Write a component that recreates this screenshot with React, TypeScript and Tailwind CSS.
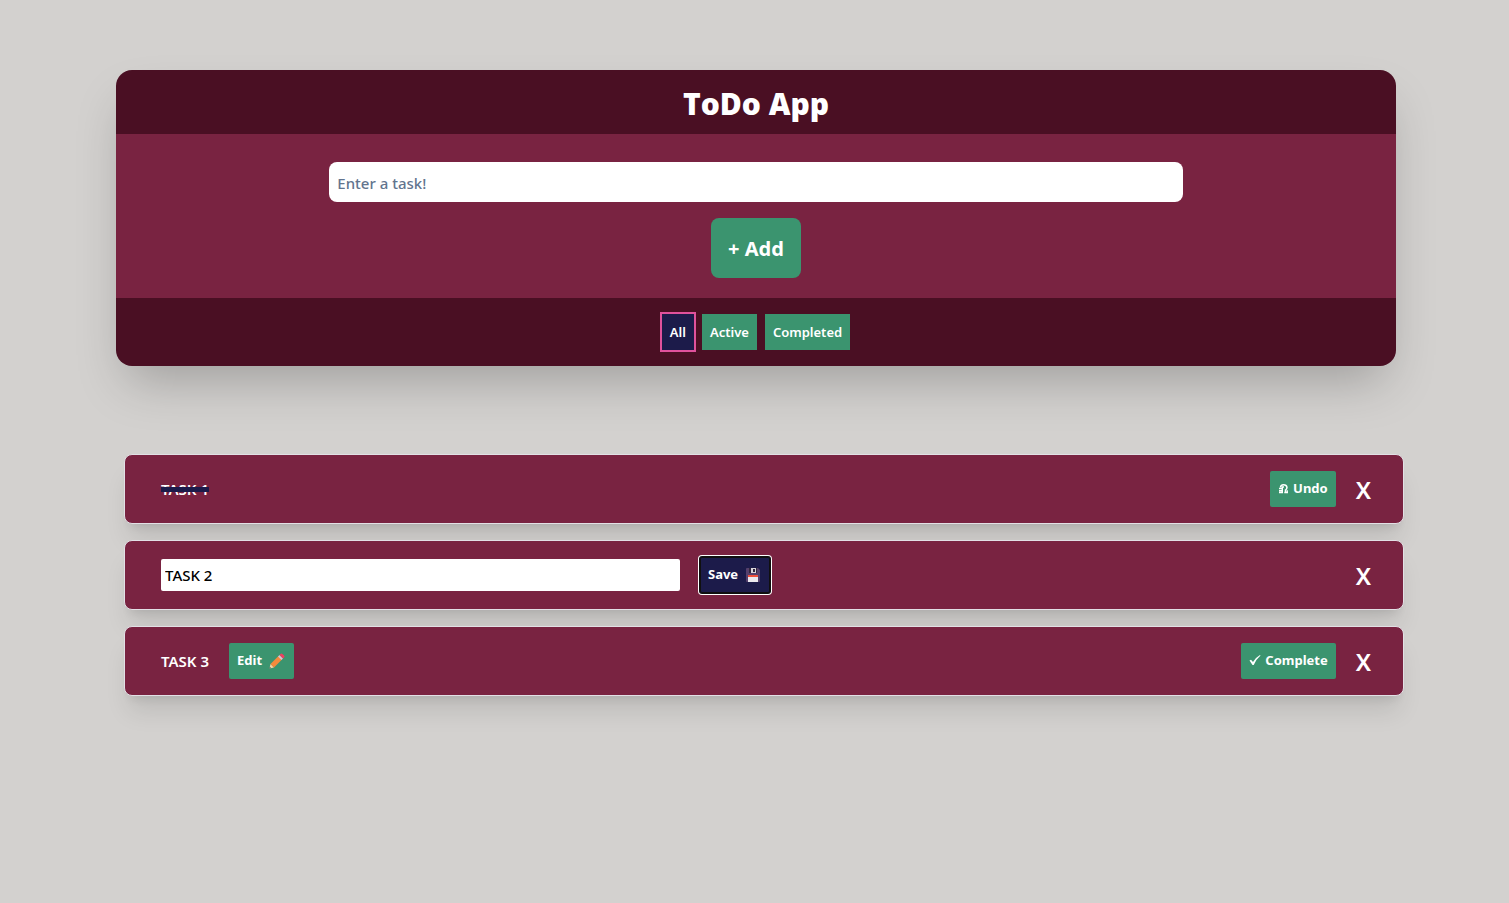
import { useState } from "react";

const green = "bg-[#3b946f] text-white hover:bg-[#32805f]";
const navy = "bg-[#1c1b4a] text-white";

function UndoIcon() {
  return (
    <svg aria-hidden="true" className="h-3 w-[11px] shrink-0" viewBox="0 0 10 12" fill="none" stroke="currentColor">
      <path d="M2 4.500Q2 1.800 5 1.800T8.500 4.300Q8.500 6 7 7v2.200" strokeWidth="1.500" />
      <path d="M5.500 4H3.800v1.500H.5M3.800 5.500v3.700M.5 7.700h3M.5 9.500h4M5.800 9.500h3.700M8.700 7.300v2" strokeWidth="1.400" />
    </svg>
  );
}

function FloppyIcon() {
  return (
    <svg aria-hidden="true" className="h-[18px] w-[18px] shrink-0" viewBox="0 0 18 18">
      <path d="M3 2h11l2 2v11a1 1 0 0 1-1 1H3a1 1 0 0 1-1-1V3a1 1 0 0 1 1-1z" fill="#54406c" />
      <path d="M5 2h8v5H5z" fill="#31263d" />
      <path d="M7 2h5v5H7z" fill="#d9d5dc" />
      <path d="M9 3h2v3H9z" fill="#31263d" />
      <path d="M4 9h10v7H4z" fill="#ece9ee" />
      <path d="M4 9h10v2H4z" fill="#f0503c" />
    </svg>
  );
}

function PencilIcon() {
  return (
    <svg aria-hidden="true" className="h-[18px] w-[18px] shrink-0" viewBox="0 0 18 18">
      <path d="M1.500 16.500l1-4.500 3.500 3.500z" fill="#f3d3a2" />
      <path d="M2.500 12L10.500 4l3.500 3.500L6 15.500z" fill="#f58a3c" />
      <path d="M10 4.500l1.500-1.500L15 6.500 13.500 8z" fill="#d3c4d2" />
      <path d="M11.500 3l1-1q1-1 2.200.2l1.200 1.100q1.200 1.200.2 2.200l-1.100 1z" fill="#ee4060" />
      <path d="M1.500 16.500l.4-1.600 1.200 1.200z" fill="#4b3b50" />
    </svg>
  );
}

const row =
  "flex h-[70px] items-center justify-between rounded-lg border border-[#e2e0e5] bg-[#792341] pr-8 pl-9 text-white shadow-xl";
const small = "flex h-9 items-center rounded-xs px-2 text-[13px] font-bold";

function Remove({ task }: { task: string }) {
  return (
    <button aria-label={`Delete ${task}`} className="pt-0.5 text-2xl leading-6 font-semibold">
      X
    </button>
  );
}

export default function App() {
  const [filter, setFilter] = useState("All");
  return (
    <main className="min-h-screen bg-[#d3d1cf] pt-[70px] pl-[3px] font-['Noto_Sans','Open_Sans',sans-serif]">
      <section className="mx-auto max-w-7xl overflow-hidden rounded-2xl bg-[#4a0f23] text-white shadow-2xl">
        <h1 className="flex h-16 items-center justify-center pt-1 font-['Open_Sans','Noto_Sans',sans-serif] text-3xl font-extrabold">
          ToDo App
        </h1>
        <form
          onSubmit={(e) => e.preventDefault()}
          className="flex flex-col items-center gap-4 bg-[#792341] pt-7 pb-5"
        >
          <input
            aria-label="New task"
            placeholder="Enter a task!"
            className="h-10 w-2/3 rounded-lg bg-white px-2 pt-0.5 text-[15px] font-medium text-black placeholder:text-slate-500"
          />
          <button className={`h-[60px] rounded-lg px-[17px] pt-0.5 text-xl font-bold ${green}`}>+ Add</button>
        </form>
        <div className="flex h-[68px] items-center justify-center gap-2">
          {["All", "Active", "Completed"].map((name) => (
            <button
              key={name}
              onClick={() => setFilter(name)}
              className={`h-9 px-2 pt-0.5 text-[13px] font-semibold ${
                filter === name ? `${navy} outline-2 outline-[#e0529c]` : green
              }`}
            >
              {name}
            </button>
          ))}
        </div>
      </section>

      <div className="mx-auto mt-[88px] max-w-7xl">
        <ul className="relative left-2 flex flex-col gap-4">
          <li className={row}>
            <span className="text-[15px] font-semibold line-through decoration-[#1c1b4a] decoration-[5px]">
              TASK 1
            </span>
            <div className="flex items-center gap-5">
              <button className={`${small} gap-1 ${green}`}>
                <UndoIcon />
                Undo
              </button>
              <Remove task="TASK 1" />
            </div>
          </li>
          <li className={row}>
            <div className="flex flex-1 items-center gap-5">
              <input
                aria-label="Edit task"
                defaultValue="TASK 2"
                className="h-8 w-[519px] rounded-xs bg-white px-1 text-[15px] font-medium text-black"
              />
              <button
                className={`${small} gap-1.5 shadow-[inset_0_0_0_1px_#101010,0_0_0_1px_#101010,0_0_0_2px_#ffffff] ${navy}`}
              >
                Save
                <FloppyIcon />
              </button>
            </div>
            <Remove task="TASK 2" />
          </li>
          <li className={row}>
            <div className="flex items-center gap-5">
              <span className="text-[15px] font-semibold">TASK 3</span>
              <button className={`${small} gap-1.5 ${green}`}>
                Edit
                <PencilIcon />
              </button>
            </div>
            <div className="flex items-center gap-5">
              <button className={`${small} gap-1 ${green}`}>
                <svg aria-hidden="true" className="mb-0.5 h-[10px] w-3" viewBox="0 0 11 10" fill="currentColor">
                  <path d="M0 5.500L1.500 4.700 3.500 7Q6 2.500 10.500 0L11 .6Q7 4 4.200 10H3z" />
                </svg>
                Complete
              </button>
              <Remove task="TASK 3" />
            </div>
          </li>
        </ul>
      </div>
    </main>
  );
}
